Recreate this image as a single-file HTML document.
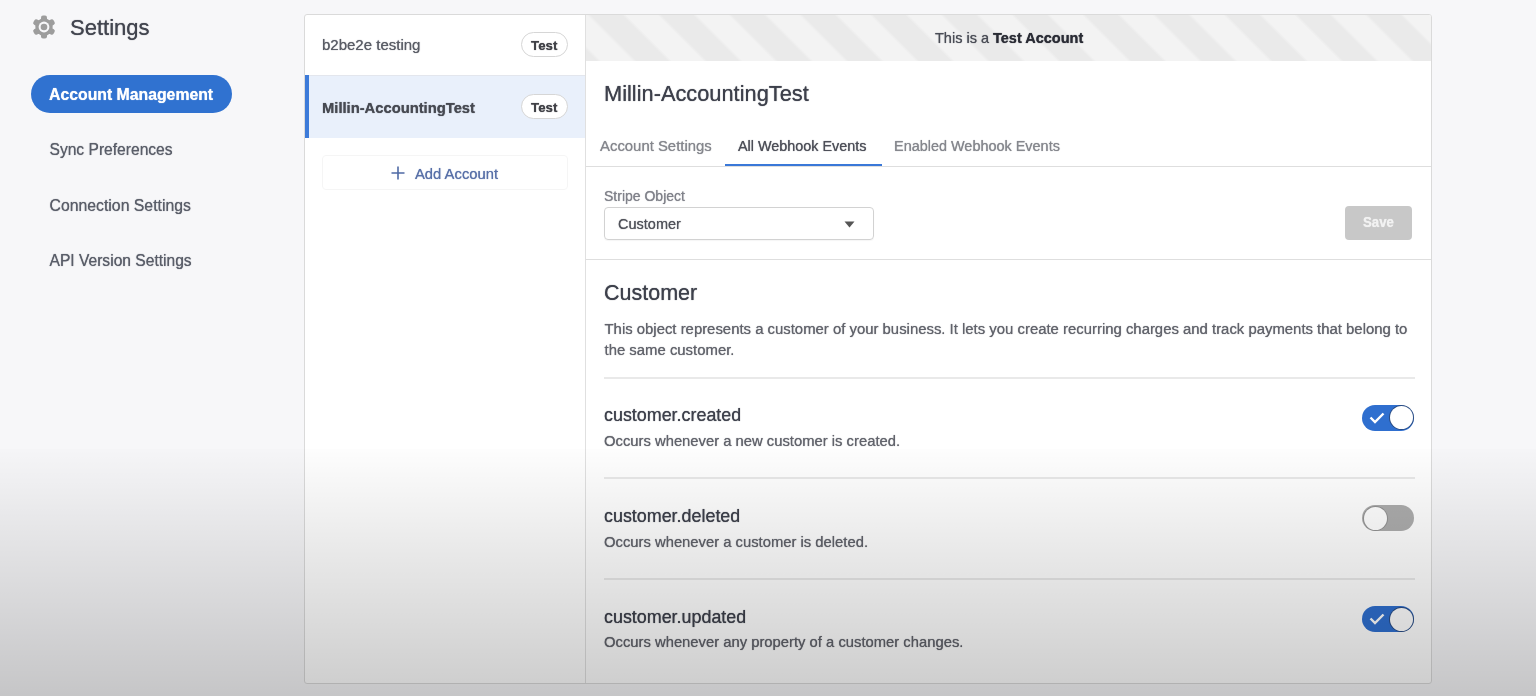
<!DOCTYPE html>
<html><head><meta charset="utf-8">
<style>
*{box-sizing:border-box;margin:0;padding:0}
html,body{width:1536px;height:696px;overflow:hidden}
body{background:#f7f7f9;font-family:"Liberation Sans",sans-serif;position:relative;color:#333}
.t{position:absolute;white-space:nowrap;line-height:1;text-shadow:0 0 0.9px currentColor}
#ovl{position:absolute;left:0;top:449px;width:1536px;height:247px;background:linear-gradient(to bottom,rgba(0,0,0,0.008),rgba(0,0,0,0.2));pointer-events:none;z-index:50}
.pill{position:absolute;left:31px;top:75px;width:201px;height:38px;border-radius:19px;background:#3072d0}
.panel{position:absolute;left:304px;top:14px;width:1128px;height:670px;border:1px solid #dadada;border-radius:3px;background:#fff;overflow:hidden}
.abs{position:absolute}
.badge{position:absolute;left:216px;width:47px;height:25px;border:1px solid #d6d6d6;border-radius:13px;background:#fff}
.banner{position:absolute;left:281px;top:0;width:846px;height:46px;overflow:hidden}.banner i{position:absolute;left:-22px;top:0;width:868px;height:46px;background:repeating-linear-gradient(45deg,#eaeaea 1.5px,#eaeaea 23.5px,#f3f3f3 26.5px,#f3f3f3 48.5px,#eaeaea 51.5px)}
.hr{position:absolute;height:1px;background:#dedede}
.hr2{position:absolute;height:2px;background:#e9e9e9}
.tog{position:absolute;left:1057px;width:52px;height:26px;border-radius:13px}
.tog.on{background:#2f6fcf}
.tog.off{background:#adadad}
.tog.on .knob{box-shadow:0 0 0 1px rgba(35,45,70,0.55)}
.tog.off .knob{box-shadow:0 0 0 1px rgba(120,120,120,0.5)}
.knob{position:absolute;top:1.5px;width:23px;height:23px;border-radius:50%;background:#fff}
</style></head><body>
<div id="root" style="position:absolute;left:0;top:0;width:1536px;height:696px;filter:blur(0.4px)">

<!-- sidebar -->
<svg class="abs" style="left:32px;top:15px" width="24" height="24" viewBox="-12 -12 24 24">
  <g fill="#9d9d9d">
    <circle r="8.7"/>
    <rect x="-3" y="-11.6" width="6" height="6" rx="2" transform="rotate(0)"/>
    <rect x="-3" y="-11.6" width="6" height="6" rx="2" transform="rotate(60)"/>
    <rect x="-3" y="-11.6" width="6" height="6" rx="2" transform="rotate(120)"/>
    <rect x="-3" y="-11.6" width="6" height="6" rx="2" transform="rotate(180)"/>
    <rect x="-3" y="-11.6" width="6" height="6" rx="2" transform="rotate(240)"/>
    <rect x="-3" y="-11.6" width="6" height="6" rx="2" transform="rotate(300)"/>
  </g>
  <circle r="5.4" fill="#f7f7f9"/>
  <circle r="3.3" fill="#9d9d9d"/>
</svg>
<div class="t" style="left:70px;top:16.5px;font-size:22px;color:#42454f">Settings</div>

<div class="pill"></div>
<div class="t" style="left:49px;top:86.6px;font-size:15.8px;font-weight:700;color:#fff">Account Management</div>
<div class="t" style="left:49.5px;top:141.9px;font-size:15.6px;color:#5a5e69">Sync Preferences</div>
<div class="t" style="left:49.5px;top:197.8px;font-size:15.8px;color:#5a5e69">Connection Settings</div>
<div class="t" style="left:49.5px;top:253.4px;font-size:15.6px;color:#5a5e69">API Version Settings</div>

<div class="panel">
  <!-- list column -->
  <div class="t" style="left:17px;top:22.4px;font-size:15px;color:#5a5d66">b2be2e testing</div>
  <div class="badge" style="top:17.1px"></div>
  <div class="t" style="left:226px;top:23.7px;font-size:13.3px;font-weight:700;color:#404147">Test</div>

  <div class="abs" style="left:0;top:60px;width:280px;height:63px;background:#e9f0fb;border-top:1px solid #e3e6ed"></div>
  <div class="abs" style="left:0;top:60px;width:4px;height:63px;background:#3d7bd9"></div>
  <div class="t" style="left:17px;top:86.2px;font-size:14.75px;font-weight:700;color:#474a52">Millin-AccountingTest</div>
  <div class="badge" style="top:79.1px"></div>
  <div class="t" style="left:226px;top:85.7px;font-size:13.3px;font-weight:700;color:#404147">Test</div>

  <div class="abs" style="left:17px;top:140.3px;width:246px;height:35px;border:1px solid #f5f5f5;border-radius:4px"></div>
  <svg class="abs" style="left:86px;top:151px" width="14" height="14" viewBox="0 0 14 14"><path d="M7 0.5V13.5M0.5 7H13.5" stroke="#4f6aa5" stroke-width="1.6"/></svg>
  <div class="t" style="left:110px;top:152px;font-size:14.8px;color:#5870a8">Add Account</div>

  <div class="abs" style="left:280px;top:0;width:1px;height:670px;background:#e0e0e0"></div>

  <!-- detail column -->
  <div class="banner"><i></i></div>
  <div class="t" style="left:630px;top:16.4px;font-size:14.5px;color:#4a4d56">This is a <b style="color:#2a2c35">Test Account</b></div>

  <div class="t" style="left:299px;top:67.8px;font-size:21.8px;color:#3d404b">Millin-AccountingTest</div>

  <div class="t" style="left:295px;top:124px;font-size:14.9px;color:#85878d">Account Settings</div>
  <div class="t" style="left:433px;top:124px;font-size:14.4px;color:#4d4f58">All Webhook Events</div>
  <div class="t" style="left:589px;top:124px;font-size:14.45px;color:#85878d">Enabled Webhook Events</div>
  <div class="hr" style="left:281px;top:151px;width:846px"></div>
  <div class="abs" style="left:420px;top:148.8px;width:157px;height:2.6px;background:#3a78d8"></div>

  <div class="t" style="left:299px;top:173.5px;font-size:14px;color:#80828a">Stripe Object</div>
  <div class="abs" style="left:299px;top:192px;width:270px;height:33px;border:1px solid #d2d2d2;border-radius:4px;box-shadow:0 1px 1px rgba(0,0,0,0.04)"></div>
  <div class="t" style="left:313px;top:201.9px;font-size:14.5px;color:#50525a">Customer</div>
  <svg class="abs" style="left:539px;top:206px" width="11" height="7" viewBox="0 0 11 7"><path d="M0.5 0.5H10.5L5.5 6.5Z" fill="#555"/></svg>

  <div class="abs" style="left:1040px;top:190.6px;width:67px;height:34px;border-radius:4px;background:#c8c8c8"></div>
  <div class="t" style="left:1057.5px;top:199.3px;font-size:15.2px;font-weight:700;color:#f2f2f2;transform:scaleX(0.87);transform-origin:0 0">Save</div>

  <div class="hr" style="left:281px;top:244px;width:846px"></div>

  <div class="t" style="left:299px;top:267.7px;font-size:21.5px;color:#3d404b">Customer</div>
  <div class="t" style="left:299.5px;font-size:14.9px;line-height:21.3px;color:#62646c;top:304.2px">This object represents a customer of your business. It lets you create recurring charges and track payments that belong to<br>the same customer.</div>
  <div class="hr2" style="left:299px;top:362px;width:811px"></div>

  <div class="t" style="left:299px;top:391.7px;font-size:17.9px;color:#3d404b">customer.created</div>
  <div class="t" style="left:299px;top:418.5px;font-size:14.8px;color:#62646c">Occurs whenever a new customer is created.</div>
  <div class="tog on" style="top:389.5px"><div class="knob" style="left:27.5px"></div>
    <svg class="abs" style="left:7px;top:7px" width="16" height="12" viewBox="0 0 16 12"><path d="M1.5 5.5L6 10L14.5 1.5" fill="none" stroke="#fff" stroke-width="2.4"/></svg></div>
  <div class="hr2" style="left:299px;top:462px;width:811px"></div>

  <div class="t" style="left:299px;top:493.2px;font-size:17.9px;color:#3d404b">customer.deleted</div>
  <div class="t" style="left:299px;top:519.5px;font-size:14.8px;color:#62646c">Occurs whenever a customer is deleted.</div>
  <div class="tog off" style="top:490px"><div class="knob" style="left:1.5px"></div></div>
  <div class="hr2" style="left:299px;top:563px;width:811px"></div>

  <div class="t" style="left:299px;top:593.9px;font-size:17.9px;color:#3d404b">customer.updated</div>
  <div class="t" style="left:299px;top:620px;font-size:14.8px;color:#62646c">Occurs whenever any property of a customer changes.</div>
  <div class="tog on" style="top:591px"><div class="knob" style="left:27.5px"></div>
    <svg class="abs" style="left:7px;top:7px" width="16" height="12" viewBox="0 0 16 12"><path d="M1.5 5.5L6 10L14.5 1.5" fill="none" stroke="#fff" stroke-width="2.4"/></svg></div>
</div>

</div>
<div id="ovl"></div>
</body></html>
